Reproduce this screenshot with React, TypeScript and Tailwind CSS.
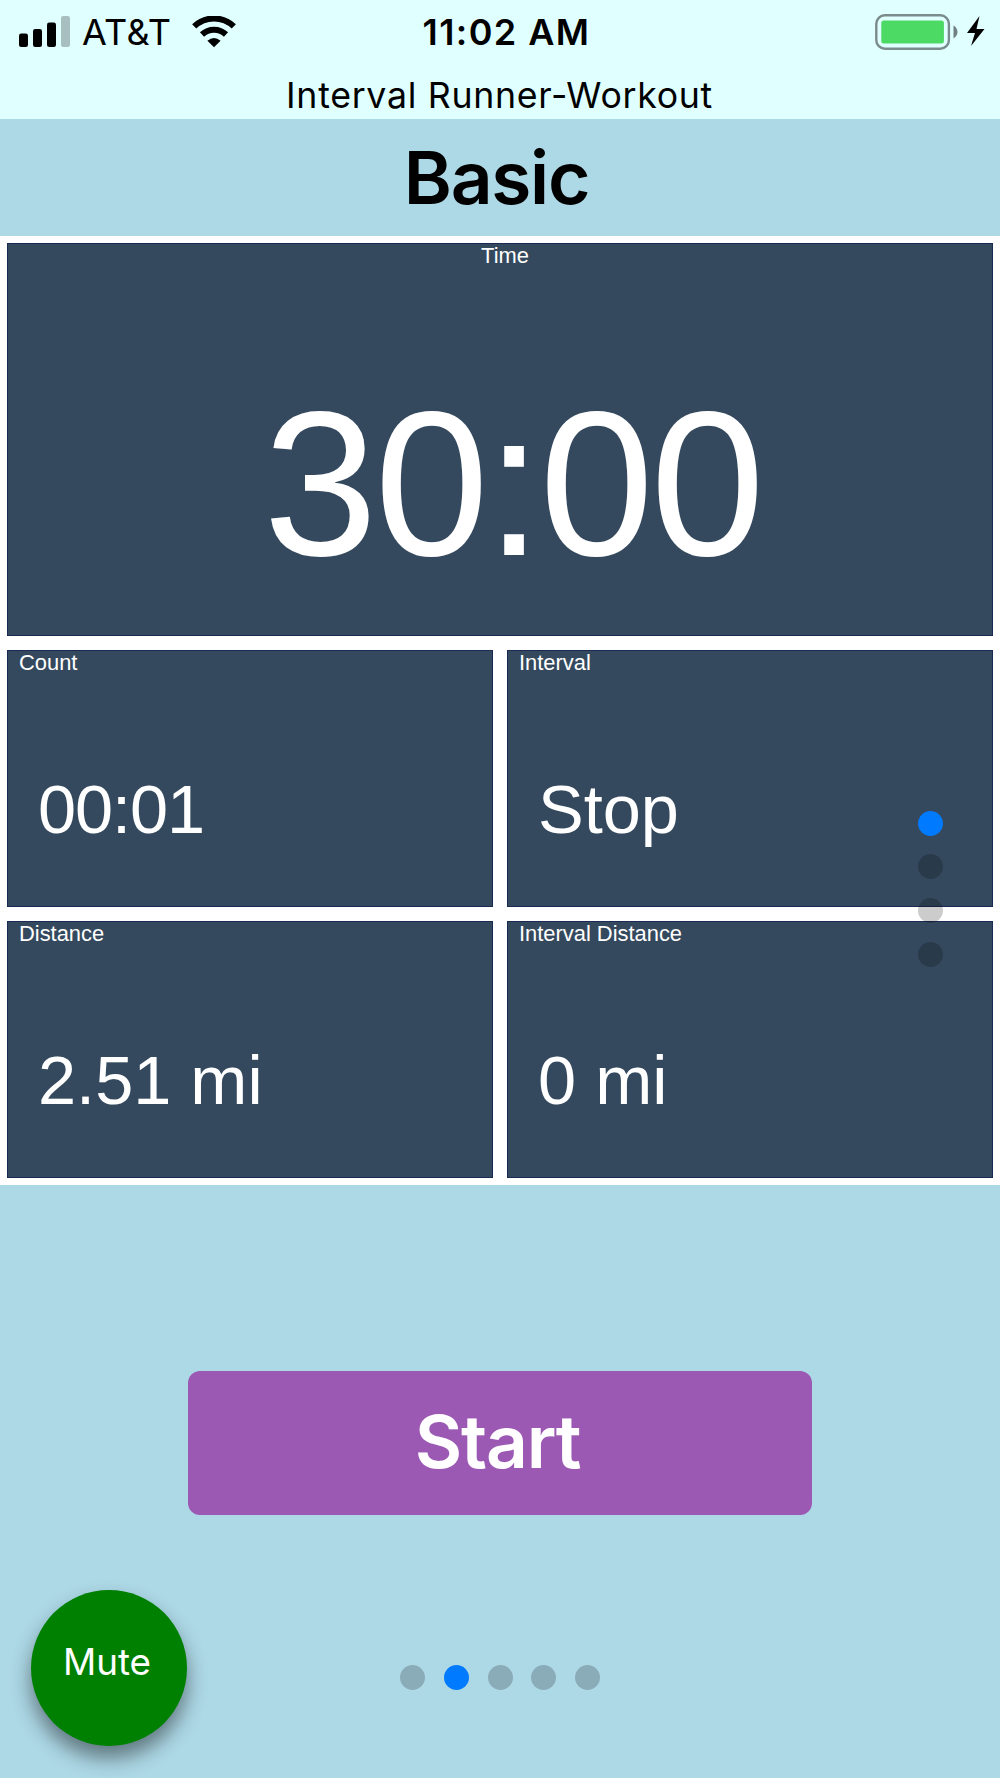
import React from "react";

type TileProps = { label: string; value: string; tight?: boolean };

function Tile({ label, value, tight }: TileProps) {
  return (
    <div className="h-[257px] border border-[#1b2a52] bg-[#34495e] font-['Liberation_Sans',Arial,sans-serif] text-white">
      <div className="pl-[11px] text-[21.9px] leading-[23px]">{label}</div>
      <div
        className={
          tight
            ? "mt-[96px] pl-[30px] text-[68.5px] leading-[80px] tracking-[-1.1px] whitespace-pre"
            : "mt-[96px] pl-[30px] text-[68.5px] leading-[80px] whitespace-pre"
        }
      >
        {value}
      </div>
    </div>
  );
}

function Dots({ count, active, vertical }: { count: number; active: number; vertical?: boolean }) {
  return (
    <div className={vertical ? "flex flex-col gap-[18.8px]" : "flex gap-[18.8px]"}>
      {Array.from({ length: count }, (_, i) => (
        <span
          key={i}
          className={
            i === active
              ? "size-[25px] rounded-full bg-[#007aff]"
              : "size-[25px] rounded-full bg-black/20"
          }
        />
      ))}
    </div>
  );
}

function Signal() {
  return (
    <svg className="h-[32px] w-[52px]" viewBox="0 0 52 32">
      <rect x="0" y="17.5" width="9" height="13.5" rx="2.2" />
      <rect x="14" y="13" width="9" height="18" rx="2.2" />
      <rect x="28" y="6.5" width="9" height="24.5" rx="2.2" />
      <rect x="42" y="0" width="9" height="31" rx="2.2" fill="#a8bfbf" />
    </svg>
  );
}

function Wifi() {
  return (
    <svg className="h-[32px] w-[44px]" viewBox="0 0 44 32">
      <g fill="none" stroke="#000" strokeWidth="6">
        <path d="M2.2 10.4A28.6 28.6 0 0 1 41.8 10.4" />
        <path d="M10 18.5A17.4 17.4 0 0 1 34 18.5" />
      </g>
      <path d="M22 31.3L15.4 24.7Q22 19.3 28.6 24.7Z" />
    </svg>
  );
}

function Battery() {
  return (
    <svg className="h-[38px] w-[112px]" viewBox="0 0 112 38">
      <rect x="1.3" y="2.3" width="72.6" height="33.4" rx="8.5" fill="none" stroke="#7b8b8b" strokeWidth="2.4" />
      <rect x="6.3" y="7.5" width="62.6" height="23" rx="2.5" fill="#4cd964" />
      <path d="M78.5 12.5Q82.5 15 82.5 19.1Q82.5 23 78.5 25.5Z" fill="#6f7f7f" />
      <path d="M104.5 3L92 20H100L96 33L109.5 16H101.5Z" />
    </svg>
  );
}

export default function App() {
  return (
    <div className="relative flex h-[1778px] w-[1000px] flex-col overflow-hidden bg-[#add8e6] font-[Inter,sans-serif] text-black">
      <header className="h-[119px] bg-[#e0ffff]">
        <div className="grid h-16 grid-cols-3 items-center">
          <div className="flex items-center pl-[19px]">
            <Signal />
            <span className="ml-[11px] w-[90px] text-[36px] leading-[64px] font-normal tracking-[0.3px] whitespace-nowrap">AT&amp;T</span>
            <span className="ml-[20px]"><Wifi /></span>
          </div>
          <div className="pl-[13px] text-center text-[36px] leading-[64px] font-semibold tracking-[1.4px] whitespace-nowrap">11:02 AM</div>
          <div className="flex justify-end pr-[13px]"><Battery /></div>
        </div>
        <div className="pr-[1px] pt-[7px] text-center text-[35.7px] leading-[49px] font-normal tracking-[0.7px]">Interval Runner-Workout</div>
      </header>

      <h1 className="h-[117px] pr-[7px] text-center text-[73px] leading-[117px] font-semibold tracking-[-1.3px]">Basic</h1>

      <main className="flex h-[949px] flex-col gap-[14px] bg-white p-[7px]">
        <section className="h-[393px] border border-[#1b2a52] bg-[#34495e] font-['Liberation_Sans',Arial,sans-serif] text-white">
          <div className="pl-[10px] text-center text-[21.9px] leading-[23px]">Time</div>
          <div className="mt-[117px] pl-[25px] text-center text-[205.5px] leading-[200px] tracking-[-3.2px]">30:00</div>
        </section>
        <section className="grid grid-cols-2 gap-[14px]">
          <Tile label="Count" value="00:01" tight />
          <Tile label="Interval" value="Stop" />
          <Tile label="Distance" value="2.51 mi" />
          <Tile label="Interval Distance" value="0 mi" />
        </section>
      </main>

      <button className="mt-[186px] h-[144px] w-[624px] self-center rounded-[12px] bg-[#9b59b4] pr-[5px] pb-[2px] text-[73px] font-semibold tracking-[-1.2px] text-white">
        Start
      </button>

      <footer className="mt-[75px] grid grid-cols-[1fr_auto_1fr] items-start pl-[31px]">
        <button className="size-[156px] rounded-full bg-[#008000] pr-[4px] pb-[12px] text-[36.8px] font-normal text-white shadow-[0_12px_20px_rgba(0,0,0,0.45)]">
          Mute
        </button>
        <div className="-ml-[31px] pt-[75px]"><Dots count={5} active={1} /></div>
      </footer>

      <div className="absolute top-[810.5px] left-[918px]">
        <Dots count={4} active={0} vertical />
      </div>
    </div>
  );
}
